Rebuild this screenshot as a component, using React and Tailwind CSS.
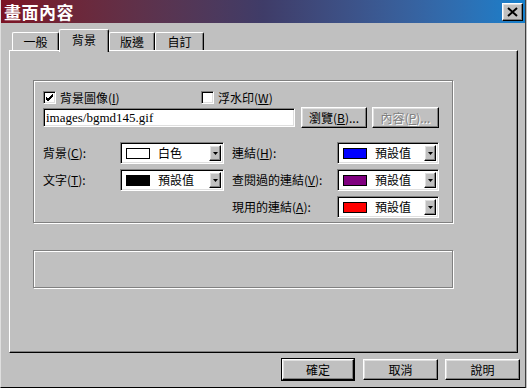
const raised =
  "border border-t-white border-l-white border-r-black border-b-black shadow-[inset_-1px_-1px_0_#808080,inset_1px_1px_0_#dfdfdf] bg-[#c0c0c0]";
const sunken =
  "border border-t-[#808080] border-l-[#808080] border-r-white border-b-white shadow-[inset_1px_1px_0_#000,inset_-1px_-1px_0_#dfdfdf] bg-white";
const etched = "border border-[#808080] shadow-[inset_1px_1px_0_#fff,1px_1px_0_#fff]";

const Mn = ({ text, k }) => (
  <span className="whitespace-nowrap">
    {text}(<u>{k}</u>)
  </span>
);

const Check = ({ checked }) => (
  <span className={`${sunken} flex h-[13px] w-[13px] shrink-0 items-center justify-center`}>
    {checked && (
      <svg width="9" height="9" viewBox="0 0 9 9">
        <path d="M1 4 L3 6 L8 1 M1 5 L3 7 L8 2 M1 6 L3 8 L8 3" stroke="#000" strokeWidth="1" fill="none" />
      </svg>
    )}
  </span>
);

const Button = ({ children, width, disabled, isDefault }) => (
  <div
    className={`flex h-[21px] items-center justify-center ${width} ${
      isDefault ? "outline outline-1 outline-black" : ""
    } ${raised} ${disabled ? "text-[#808080] [text-shadow:1px_1px_0_#fff]" : "text-black"}`}
  >
    {children}
  </div>
);

const ColorSelect = ({ color, label, width }) => (
  <div className={`${sunken} flex h-[22px] ${width} items-center pr-[2px]`}>
    <span className={`ml-[5px] h-[11px] w-[24px] border border-black`} style={{ background: color }} />
    <span className="ml-[8px] flex-1 leading-none">{label}</span>
    <span className={`${raised} flex h-[16px] w-[12px] items-center justify-center`}>
      <svg width="5" height="3" viewBox="0 0 5 3">
        <path d="M0 0 H5 L2.5 3 Z" fill="#000" />
      </svg>
    </span>
  </div>
);

const tabs = [
  { name: "一般", w: "w-[47px]" },
  { name: "背景", w: "w-[50px]", active: true },
  { name: "版邊", w: "w-[46px]" },
  { name: "自訂", w: "w-[49px]" },
];

export default function App() {
  return (
    <div
      className="h-[388px] w-[527px] bg-[#c0c0c0] text-[12px] text-black"
      style={{ fontFamily: '"Noto Sans CJK TC", "Noto Sans", sans-serif' }}
    >
      <div className="flex h-[388px] w-[526px] flex-col border-r border-b border-r-[#404040] border-b-black border-l border-l-[#dfdfdf]">
        {/* Title bar */}
        <div className="flex h-[23px] items-center justify-between bg-gradient-to-r from-[#7c1224] via-[#3f3c68] to-[#1480cc] pl-[3px] pr-[2px]">
          <span className="text-[17px] font-bold leading-none tracking-[0.5px] text-white">畫面內容</span>
          <span className={`${raised} flex h-[18px] w-[21px] items-center justify-center`}>
            <svg width="11" height="10" viewBox="0 0 11 10">
              <path d="M1 1 L10 9 M10 1 L1 9" stroke="#000" strokeWidth="2" />
            </svg>
          </span>
        </div>

        {/* Tabs */}
        <div className="mt-[6px] flex h-[21px] items-end pl-[11px]">
          {tabs.map((t) =>
            t.active ? (
              <div
                key={t.name}
                className={`relative z-10 -mb-[2px] flex h-[23px] ${t.w} items-start justify-center rounded-t-[2px] border-t border-l border-r border-t-white border-l-white border-r-black bg-[#c0c0c0] pt-[1px] shadow-[inset_-1px_0_0_#808080]`}
              >
                {t.name}
              </div>
            ) : (
              <div
                key={t.name}
                className={`flex h-[18px] ${t.w} items-center justify-center rounded-t-[2px] border-t border-l border-r border-t-white border-l-white border-r-black shadow-[inset_-1px_0_0_#808080]`}
              >
                {t.name}
              </div>
            )
          )}
        </div>

        {/* Panel */}
        <div className="ml-[8px] h-[303px] w-[509px] border border-t-white border-l-white border-r-black border-b-black pl-[23px] pt-[29px] shadow-[inset_-1px_-1px_0_#808080]">
          <div className={`${etched} h-[143px] w-[420px] pl-[9px] pt-[10px]`}>
            <div className="flex h-[13px] items-center">
              <Check checked />
              <span className="ml-[4px] w-[141px]">
                <Mn text="背景圖像" k="I" />
              </span>
              <Check />
              <span className="ml-[4px]">
                <Mn text="浮水印" k="W" />
              </span>
            </div>
            <div className="mt-[3px] flex items-center">
              <div
                className={`${sunken} flex h-[19px] w-[252px] items-center pl-[2px] text-[13px]`}
                style={{ fontFamily: '"Liberation Serif", serif' }}
              >
                images/bgmd145.gif
              </div>
              <div className="ml-[6px]">
                <Button width="w-[66px]">
                  <Mn text="瀏覽" k="B" />...
                </Button>
              </div>
              <div className="ml-[5px]">
                <Button width="w-[67px]" disabled>
                  <Mn text="內容" k="P" />...
                </Button>
              </div>
            </div>

            <div className="mt-[14px] flex">
              <div className="flex flex-col gap-[5px]">
                <div className="flex items-center">
                  <span className="w-[77px]">
                    <Mn text="背景" k="C" />:
                  </span>
                  <ColorSelect color="#fff" label="白色" width="w-[104px]" />
                </div>
                <div className="flex items-center">
                  <span className="w-[77px]">
                    <Mn text="文字" k="T" />:
                  </span>
                  <ColorSelect color="#000" label="預設值" width="w-[104px]" />
                </div>
              </div>
              <div className="ml-[8px] flex flex-col gap-[5px]">
                <div className="flex items-center">
                  <span className="w-[105px]">
                    <Mn text="連結" k="H" />:
                  </span>
                  <ColorSelect color="#0000ff" label="預設值" width="w-[102px]" />
                </div>
                <div className="flex items-center">
                  <span className="w-[105px]">
                    <Mn text="查閱過的連結" k="V" />:
                  </span>
                  <ColorSelect color="#800080" label="預設值" width="w-[102px]" />
                </div>
                <div className="flex items-center">
                  <span className="w-[105px]">
                    <Mn text="現用的連結" k="A" />:
                  </span>
                  <ColorSelect color="#ff0000" label="預設值" width="w-[102px]" />
                </div>
              </div>
            </div>
          </div>

          <div className={`${etched} mt-[27px] h-[38px] w-[420px]`} />
        </div>

        {/* Bottom buttons */}
        <div className="ml-[281px] mt-[6px] flex">
          <Button width="w-[72px]" isDefault>
            確定
          </Button>
          <div className="ml-[9px]">
            <Button width="w-[75px]">取消</Button>
          </div>
          <div className="ml-[7px]">
            <Button width="w-[75px]">說明</Button>
          </div>
        </div>
      </div>
    </div>
  );
}
